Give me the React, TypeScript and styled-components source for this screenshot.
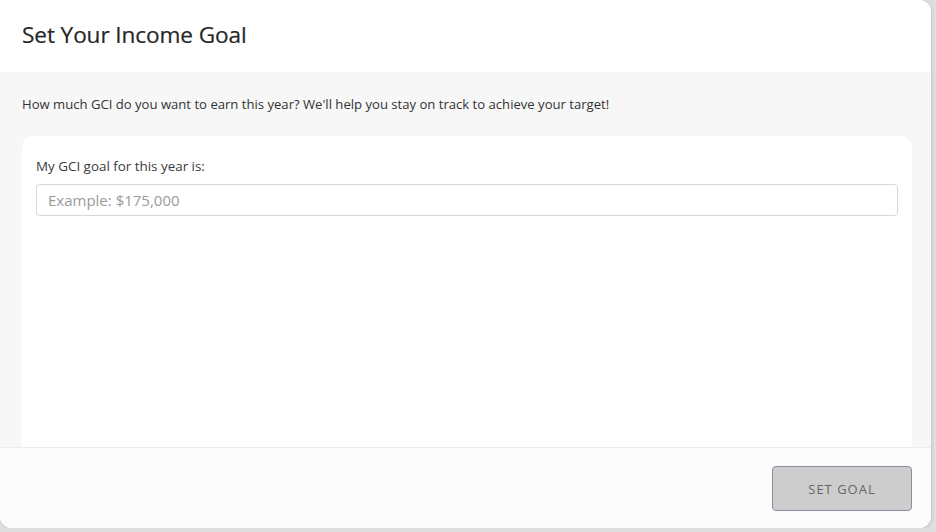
import styled, { createGlobalStyle } from 'styled-components';

const GlobalStyle = createGlobalStyle`
  html, body {
    margin: 0;
    padding: 0;
    background: #dedede;
    font-family: 'Open Sans', 'Noto Sans', sans-serif;
  }
  * {
    box-sizing: border-box;
  }
`;

// Layout
const Modal = styled.div`
  width: 931px;
  height: 528px;
  background: #fff;
  border-radius: 0 12px 12px 12px;
  box-shadow: 1px 1px 3px rgba(0, 0, 0, 0.12);
  display: flex;
  flex-direction: column;
  overflow: hidden;
`;

const Header = styled.header`
  height: 72px;
  flex-shrink: 0;
  display: flex;
  align-items: center;
  padding: 0 22px 4px;
  background: #fff;
`;

const Title = styled.h1`
  margin: 0;
  font-size: 22.6px;
  font-weight: 500;
  color: #262626;
  letter-spacing: -0.1px;
  -webkit-text-stroke: 0.2px #262626;
`;

const Body = styled.main`
  flex: 1;
  background: #f7f7f7;
  padding: 22px 19px 0 22px;
  overflow: hidden;
  display: flex;
  flex-direction: column;
`;

const Intro = styled.p`
  margin: 0 0 22px;
  font-size: 13.1px;
  color: #333;
  line-height: 20px;
`;

const Card = styled.section`
  flex: 1;
  min-height: 340px;
  background: #fff;
  border-radius: 12px;
  padding: 20px 14px 0 14px;
`;

const Label = styled.label`
  display: block;
  font-size: 13.4px;
  color: #3a3a3a;
  line-height: 20px;
  margin-bottom: 8px;
`;

const Input = styled.input`
  display: block;
  width: 100%;
  height: 32px;
  border: 1px solid #d8d8d8;
  border-radius: 4px;
  padding: 0 11px;
  font-family: inherit;
  font-size: 15px;
  color: #333;
  background: #fff;
  outline: none;

  &::placeholder {
    color: #9a9a9a;
  }
`;

const Footer = styled.footer`
  height: 81px;
  flex-shrink: 0;
  border-top: 1px solid #ebebeb;
  background: #fcfcfc;
  display: flex;
  justify-content: flex-end;
  align-items: flex-start;
  padding: 18px 19px 0 0;
`;

const Button = styled.button`
  width: 140px;
  height: 45px;
  background: #cdcdcd;
  border: 1px solid #8a8fa0;
  border-radius: 4px;
  font-family: inherit;
  font-size: 13px;
  letter-spacing: 1px;
  color: #666;
  cursor: not-allowed;
`;

export default function App() {
  return (
    <>
      <GlobalStyle />
      <Modal>
        <Header>
          <Title>Set Your Income Goal</Title>
        </Header>
        <Body>
          <Intro>
            How much GCI do you want to earn this year? We'll help you stay on track to achieve your target!
          </Intro>
          <Card>
            <Label htmlFor="gci-goal">My GCI goal for this year is:</Label>
            <Input id="gci-goal" placeholder="Example: $175,000" />
          </Card>
        </Body>
        <Footer>
          <Button disabled>SET GOAL</Button>
        </Footer>
      </Modal>
    </>
  );
}
